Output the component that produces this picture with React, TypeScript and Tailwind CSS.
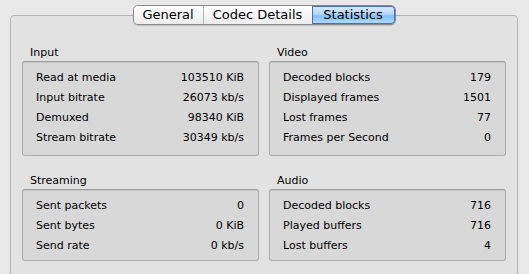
const F = { fontFamily: '"DejaVu Sans", "Lucida Grande", sans-serif' };

type Row = [string, string];
const GROUPS: { title: string; rows: Row[] }[][] = [
  [
    { title: "Input", rows: [["Read at media", "103510 KiB"], ["Input bitrate", "26073 kb/s"], ["Demuxed", "98340 KiB"], ["Stream bitrate", "30349 kb/s"]] },
    { title: "Streaming", rows: [["Sent packets", "0"], ["Sent bytes", "0 KiB"], ["Send rate", "0 kb/s"]] },
  ],
  [
    { title: "Video", rows: [["Decoded blocks", "179"], ["Displayed frames", "1501"], ["Lost frames", "77"], ["Frames per Second", "0"]] },
    { title: "Audio", rows: [["Decoded blocks", "716"], ["Played buffers", "716"], ["Lost buffers", "4"]] },
  ],
];

function Group({ title, rows, last }: { title: string; rows: Row[]; last?: boolean }) {
  return (
    <div className={last ? "" : "mb-[18px]"}>
      <div className="pl-[8px] text-[11px] leading-[13px] mb-[2px] text-black">{title}</div>
      <div className={`border border-[#acacac] border-t-[#9a9a9a] rounded-[3px] bg-[#d8d8d8] shadow-[inset_0_1px_1px_rgba(0,0,0,0.08)] pl-[13px] pr-[14px] pt-[6px] ${rows.length === 4 ? "pb-[7px]" : "pb-[4px]"}`}>
        {rows.map(([k, v]) => (
          <div key={k} className="flex justify-between items-center h-[20px] text-[11px] text-black">
            <span>{k}</span>
            <span>{v}</span>
          </div>
        ))}
      </div>
    </div>
  );
}

export default function App() {
  return (
    <div style={F} className="w-[529px] h-[274px] overflow-hidden bg-[#e8e8e8] pt-[5px] pl-[10px] pr-[11px]">
      <div className="relative z-10 flex justify-center mb-[-10px]">
        <div className="flex h-[20px] rounded-[5px] border border-[#8a8a8a] overflow-hidden shadow-[0_1px_1px_rgba(0,0,0,0.15)] text-[13px] leading-[18px] text-black">
          <div className="w-[70px] text-center bg-gradient-to-b from-[#ffffff] to-[#ececec] border-r border-[#b5b5b5]">General</div>
          <div className="w-[108px] text-center bg-gradient-to-b from-[#ffffff] to-[#ececec]">Codec Details</div>
          <div className="w-[83px] text-center bg-[linear-gradient(to_bottom,#dcecfd_0%,#b4d6fa_45%,#86bff6_55%,#b3dcfd_100%)] shadow-[inset_0_0_0_1px_#4a6fb5] rounded-r-[4px]">Statistics</div>
        </div>
      </div>
      <div className="h-[300px] border border-[#b4b4b4] rounded-[4px] bg-[#e2e2e2] pt-[30px] pl-[11px] pr-[11px] flex gap-[10px]">
        {GROUPS.map((col, i) => (
          <div key={i} className="flex-1">
            {col.map((g, j) => (
              <Group key={g.title} title={g.title} rows={g.rows} last={j === col.length - 1} />
            ))}
          </div>
        ))}
      </div>
    </div>
  );
}
